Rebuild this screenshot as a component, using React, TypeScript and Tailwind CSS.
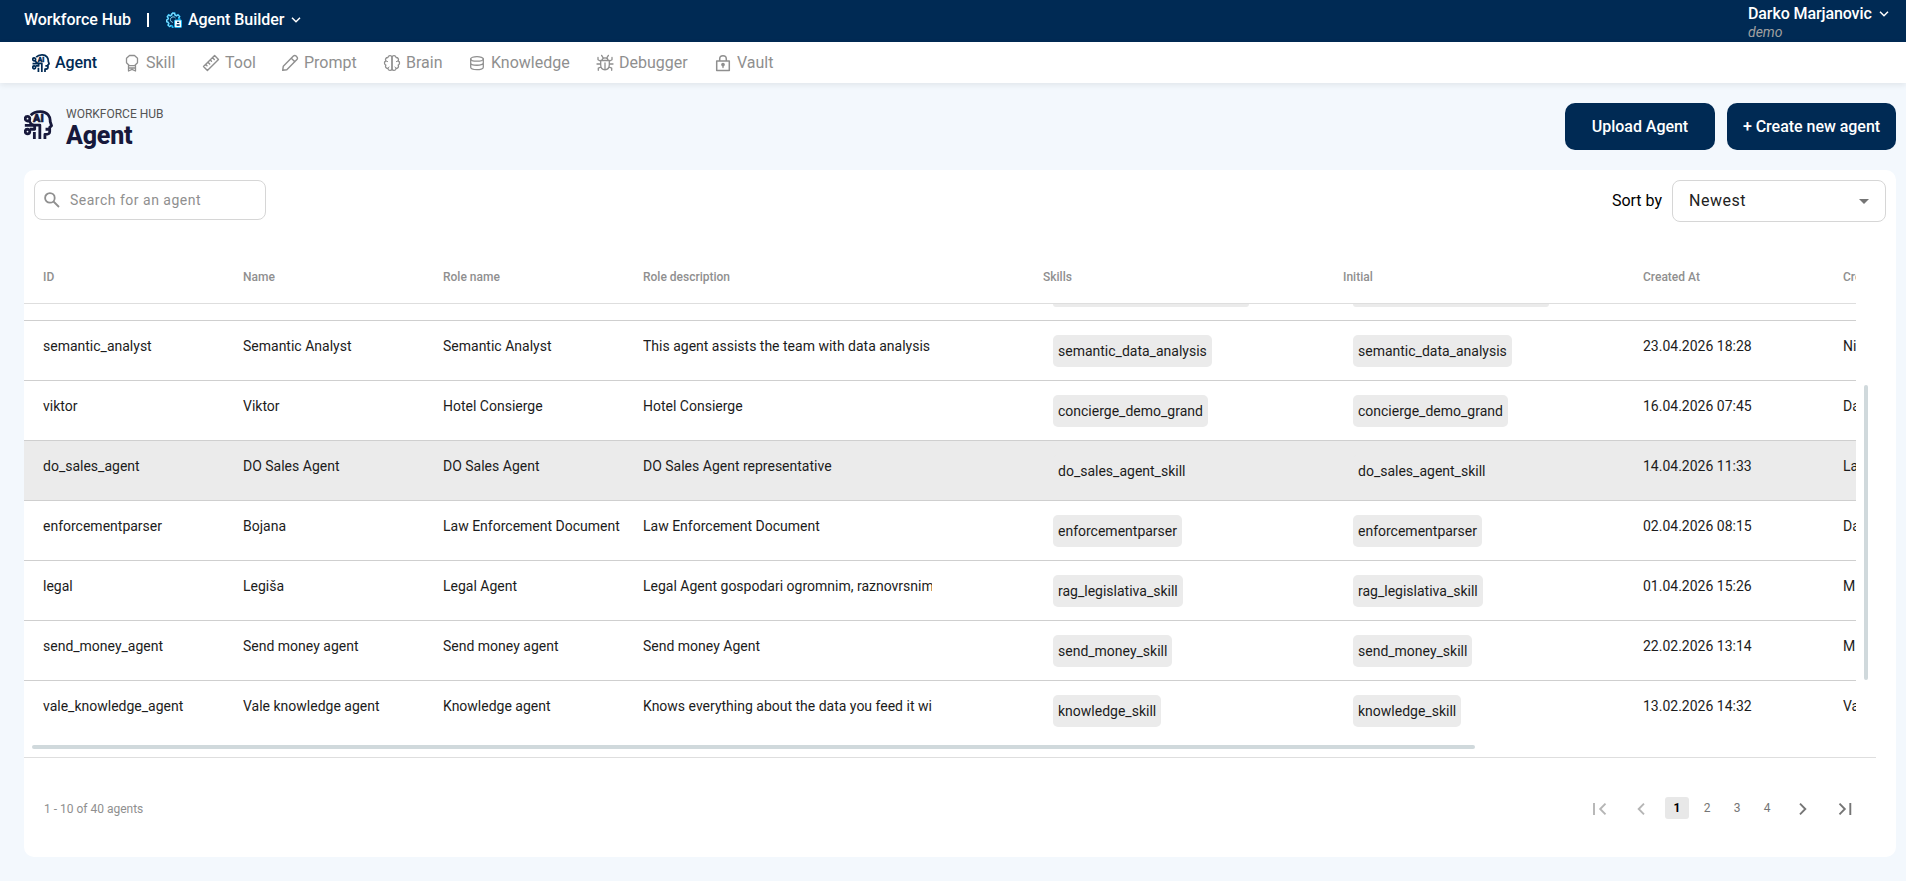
import { type ReactNode } from "react";

type Agent = {
  id: string;
  name: string;
  roleName: string;
  description: string;
  skill: string;
  createdAt: string;
  createdBy: string;
  selected?: boolean;
};

const agents: Agent[] = [
  { id: "semantic_analyst", name: "Semantic Analyst", roleName: "Semantic Analyst", description: "This agent assists the team with data analysis", skill: "semantic_data_analysis", createdAt: "23.04.2026 18:28", createdBy: "Ni" },
  { id: "viktor", name: "Viktor", roleName: "Hotel Consierge", description: "Hotel Consierge", skill: "concierge_demo_grand", createdAt: "16.04.2026 07:45", createdBy: "Da" },
  { id: "do_sales_agent", name: "DO Sales Agent", roleName: "DO Sales Agent", description: "DO Sales Agent representative", skill: "do_sales_agent_skill", createdAt: "14.04.2026 11:33", createdBy: "La", selected: true },
  { id: "enforcementparser", name: "Bojana", roleName: "Law Enforcement Document", description: "Law Enforcement Document", skill: "enforcementparser", createdAt: "02.04.2026 08:15", createdBy: "Da" },
  { id: "legal", name: "Legiša", roleName: "Legal Agent", description: "Legal Agent gospodari ogromnim, raznovrsnim", skill: "rag_legislativa_skill", createdAt: "01.04.2026 15:26", createdBy: "M" },
  { id: "send_money_agent", name: "Send money agent", roleName: "Send money agent", description: "Send money Agent", skill: "send_money_skill", createdAt: "22.02.2026 13:14", createdBy: "M" },
  { id: "vale_knowledge_agent", name: "Vale knowledge agent", roleName: "Knowledge agent", description: "Knows everything about the data you feed it wi", skill: "knowledge_skill", createdAt: "13.02.2026 14:32", createdBy: "Va" },
];

const gridCols = "grid grid-cols-[200px_200px_200px_400px_300px_300px_200px_200px] w-[2000px] pl-[19px]";

const AgentIcon = ({ className }: { className: string }) => (
  <svg viewBox="0 0 28 28" className={className} fill="none" stroke="currentColor" strokeWidth="2.700" strokeLinejoin="round">
    <path d="M6.500 5 C9 2.400 12.500 1.400 16 1.500 C22.500 1.700 25.600 6 25.300 11.200 L26.600 15.200 L24.800 16.800 V18.600 H20.800 M24.800 18.500 V21 C24.800 23.200 23.500 23.600 20.200 23.600 V28" />
    <circle cx="3.400" cy="8.400" r="2.200" />
    <circle cx="3.400" cy="20.800" r="2.200" />
    <path d="M5 10 C6 12.800 7.500 14.600 10 14.600 H15.300 V28" />
    <path d="M.8 14.800 H10.300 V18.600 H5.600 M10 21.200 V28" />
    <text x="8.800" y="11.800" fontSize="10.500" fontWeight="900" fontFamily="Roboto, sans-serif" fill="currentColor" stroke="currentColor" strokeWidth=".6">AI</text>
  </svg>
);

const BuilderIcon = () => (
  <svg viewBox="0 0 16 16" className="h-4 w-4">
    <path
      d="M6 1.200h2.600l.4 1.900 1.500.7 1.600-1 1.500 1.700-.9 1.500.5 1.200h1.200M6 1.200l-.4 1.900-1.300.7-1.700-.9L1.300 4.800l1 1.500-.5 1.300-1.200.3v1.800l1.500.4.7 1.500-.8 1.500 1.500 1.400 1.600-.9 1.100.5.4 1.300h1"
      fill="none"
      stroke="#19b5f1"
      strokeWidth="1.700"
    />
    <path
      d="M6 1.200h2.600l.4 1.900 1.500.7 1.600-1 1.500 1.700-.9 1.500M6 1.200l-.4 1.900-1.300.7-1.700-.9L1.300 4.800l1 1.500-.5 1.300-1.200.3v1.800l1.500.4.7 1.500-.8 1.500 1.500 1.400 1.600-.9"
      fill="none"
      stroke="#e2f7ff"
      strokeWidth=".6"
    />
    <path d="M9.500 6 A2.800 2.800 0 1 0 6.800 10.400" fill="none" stroke="#8bdcfa" strokeWidth="1" />
    <rect x="8.600" y="8" width="6.900" height="7.500" rx=".8" fill="#fff" stroke="#19b5f1" strokeWidth="1" />
    <path d="M11 10.300h2.200M10.600 13h3" stroke="#002a54" strokeWidth="1.300" />
  </svg>
);

const Stroke = ({ children }: { children: ReactNode }) => (
  <svg viewBox="0 0 18 18" className="h-[18px] w-[18px]" fill="none" stroke="currentColor" strokeWidth="1.300" strokeLinejoin="round" strokeLinecap="round">
    {children}
  </svg>
);

const ChevronDown = () => (
  <svg viewBox="0 0 10 6" className="h-1.5 w-2.5" fill="none" stroke="currentColor" strokeWidth="1.500">
    <path d="M1 .8 L5 4.800 L9 .8" />
  </svg>
);

const navItems: { label: string; width: string; icon: ReactNode }[] = [
  {
    label: "Skill",
    width: "w-[79px]",
    icon: (
      <Stroke>
        <path d="M6.500 1.500 H11.500 L14.500 4.300 V8.700 L11.500 11.700 H6.500 L3.500 8.700 V4.300 Z M5.500 11.500 V17 L9 15.400 L12.500 17 V11.500 M5.500 14 H12.500" />
      </Stroke>
    ),
  },
  {
    label: "Tool",
    width: "w-[79px]",
    icon: (
      <Stroke>
        <path d="M1.500 12.600 L12.600 1.500 L16.500 5.400 L5.400 16.500 Z M10.600 3.700 L12.300 5.400 M8.300 6 L9.500 7.200 M6 8.200 L7.700 9.900 M3.800 10.500 L5 11.700" strokeWidth="1.400" />
      </Stroke>
    ),
  },
  {
    label: "Prompt",
    width: "w-[102px]",
    icon: (
      <Stroke>
        <path d="M1.700 16.300 L2.300 12.200 L12.400 2.100 C13.200 1.300 14.300 1.300 15.100 2.100 L15.900 2.900 C16.700 3.700 16.700 4.800 15.900 5.600 L5.800 15.700 Z M10.300 4.200 L13.800 7.700" strokeWidth="1.400" />
      </Stroke>
    ),
  },
  {
    label: "Brain",
    width: "w-[85px]",
    icon: (
      <Stroke>
        <path d="M9 3 C8.300 1 5.200 1.200 4.900 3.500 C2.800 3.400 2 5.500 2.800 6.900 C1 7.800 1 10.200 2.800 11.100 C2 12.800 2.800 14.500 4.900 14.500 C5.200 16.900 8.300 17 9 15 Z" />
        <path d="M9 3 C9.700 1 12.800 1.200 13.100 3.500 C15.200 3.400 16 5.500 15.200 6.900 C17 7.800 17 10.200 15.200 11.100 C16 12.800 15.200 14.500 13.100 14.500 C12.800 16.900 9.700 17 9 15 Z" />
        <path d="M4.600 7.600 L2.800 6.900 M13.400 7.600 L15.200 6.900 M4.900 14.500 L6 13 M13.100 14.500 L12 13" strokeWidth="1" />
      </Stroke>
    ),
  },
  {
    label: "Knowledge",
    width: "w-[128px]",
    icon: (
      <Stroke>
        <ellipse cx="9" cy="4.900" rx="6.300" ry="2.300" />
        <path d="M2.700 4.900 V13.300 C2.700 16.500 15.300 16.500 15.300 13.300 V4.900 M2.700 9 C2.700 12 15.300 12 15.300 9" />
      </Stroke>
    ),
  },
  {
    label: "Debugger",
    width: "w-[118px]",
    icon: (
      <Stroke>
        <path d="M4.700 6.500 H13.300 V10.800 C13.300 17.500 4.700 17.500 4.700 10.800 Z M9 9 V15.300 M6 6.300 C6 3 12 3 12 6.300 M7 3.700 L5.600 1.400 M11 3.700 L12.400 1.400 M4.700 7.200 L2 5.700 V3.500 M13.300 7.200 L16 5.700 V3.500 M4.700 10 H1 M13.300 10 H17 M5 13 L2.300 14.200 V16.300 M13 13 L15.700 14.200 V16.300" />
      </Stroke>
    ),
  },
  {
    label: "Vault",
    width: "w-[80px]",
    icon: (
      <Stroke>
        <path d="M2.700 7 H15.300 V16.500 H2.700 Z M5.700 7 V5 C5.700 .8 12.300 .8 12.300 5 V7" strokeWidth="1.500" />
        <circle cx="9" cy="10.600" r="1.200" fill="currentColor" />
        <path d="M9 11 V13.600" />
      </Stroke>
    ),
  },
];

const Chip = ({ label }: { label: string }) => (
  <span className="ml-2.5 mt-3.5 h-8 w-fit rounded-[5px] bg-[#ebebeb] px-[5px] leading-8">{label}</span>
);

const AgentRow = ({ agent }: { agent: Agent }) => (
  <div className={`${gridCols} h-[60px] shrink-0 border-b border-[#cfcfcf] text-[14px] whitespace-nowrap text-[#1c1c1c] ${agent.selected ? "bg-[#ebebeb]" : ""}`}>
    <span className="pt-[15px] leading-[20px]">{agent.id}</span>
    <span className="pt-[15px] leading-[20px]">{agent.name}</span>
    <span className="pt-[15px] leading-[20px]">{agent.roleName}</span>
    <span className="w-[289px] overflow-hidden pt-[15px] leading-[20px]">{agent.description}</span>
    <Chip label={agent.skill} />
    <Chip label={agent.skill} />
    <span className="pt-[15px] leading-[20px]">{agent.createdAt}</span>
    <span className="pt-[15px] leading-[20px]">{agent.createdBy}</span>
  </div>
);

const Pager = () => (
  <div className="flex items-center text-[12px] text-[#757575]">
    <svg viewBox="0 0 14 12" className="h-3 w-3.5 text-[#b5b5b5]" fill="none" stroke="currentColor" strokeWidth="1.900">
      <path d="M1 0 V12 M12.500 .7 L7.200 6 L12.500 11.300" />
    </svg>
    <svg viewBox="0 0 8 12" className="ml-[30px] h-3 w-2 text-[#b5b5b5]" fill="none" stroke="currentColor" strokeWidth="1.900">
      <path d="M7 .7 L1.700 6 L7 11.300" />
    </svg>
    <div className="-mt-0.5 ml-5 flex items-center gap-1.5">
      <span className="h-[22px] w-6 rounded-[3px] bg-[#e8e8e8] text-center leading-[22px] font-bold text-black">1</span>
      <span className="w-6 text-center">2</span>
      <span className="w-6 text-center">3</span>
      <span className="w-6 text-center">4</span>
    </div>
    <svg viewBox="0 0 8 12" className="ml-5 h-3 w-2" fill="none" stroke="currentColor" strokeWidth="1.900">
      <path d="M1 .7 L6.300 6 L1 11.300" />
    </svg>
    <svg viewBox="0 0 14 12" className="ml-[31px] h-3 w-3.5" fill="none" stroke="currentColor" strokeWidth="1.900">
      <path d="M1.500 .7 L6.800 6 L1.500 11.300 M12.300 0 V12" />
    </svg>
  </div>
);

const App = () => {
  return (
    <div className="flex h-[881px] w-[1906px] flex-col overflow-hidden bg-[#f3f8fd] font-[Roboto,sans-serif]">
      <header className="flex h-[42px] shrink-0 justify-between bg-[#002a54] pl-6 text-[16px] font-medium text-white">
        <div className="flex h-[39px] items-center tracking-[-0.03px]">
          <span className="w-[123px]">Workforce Hub</span>
          <span className="h-3.5 w-0.5 bg-white" />
          <span className="ml-[17px]"><BuilderIcon /></span>
          <span className="ml-1.5 mr-[7px]">Agent Builder</span>
          <ChevronDown />
        </div>
        <div className="w-[158px]">
          <div className="flex h-[27px] items-center tracking-[-0.1px]">
            <span className="w-[131px]">Darko Marjanovic</span>
            <ChevronDown />
          </div>
          <div className="text-[14px] leading-[10px] font-normal text-[#a0a0a0] italic">demo</div>
        </div>
      </header>

      <nav className="flex h-[41px] shrink-0 items-center bg-white pl-8 text-[16px] text-[#8f8f8f] shadow-[0_2px_6px_rgba(0,0,0,0.08)]">
        <div className="flex w-[91px] items-center gap-[5px] font-medium tracking-[-0.1px] text-[#002a54]">
          <AgentIcon className="h-[18px] w-[18px]" />
          <span>Agent</span>
        </div>
        {navItems.map((item) => (
          <div key={item.label} className={`flex shrink-0 items-center gap-[5px] ${item.width}`}>
            {item.icon}
            <span>{item.label}</span>
          </div>
        ))}
      </nav>

      <div className="flex h-[87px] shrink-0 items-start justify-between pr-2.5 pl-6 pt-5">
        <div className="flex">
          <AgentIcon className="mt-[7px] h-[29px] w-[29px] text-[#17193b]" />
          <div className="ml-[13px] pt-1">
            <div className="text-[12px] leading-[14px] text-[#555]">WORKFORCE HUB</div>
            <h1 className="mt-px text-[25px] leading-7 font-extrabold tracking-[-0.2px] text-[#17193b]">Agent</h1>
          </div>
        </div>
        <div className="flex gap-3 text-[16px] font-medium tracking-[-0.03px] text-white">
          <button className="h-[47px] w-[150px] rounded-[10px] bg-[#002a54]">Upload Agent</button>
          <button className="h-[47px] w-[169px] rounded-[10px] bg-[#002a54]">+ Create new agent</button>
        </div>
      </div>

      <main className="ml-6 mr-2.5 flex h-[687px] shrink-0 flex-col rounded-[10px] bg-white">
        <div className="flex h-[81px] shrink-0 items-start justify-between px-2.5 pt-2.5">
          <div className="flex h-10 w-[232px] items-center rounded-lg border border-[#d6d6d6] pl-[9px] text-[#8f8f8f]">
            <svg viewBox="0 0 16 16" className="h-4 w-4" fill="none" stroke="currentColor" strokeWidth="1.800">
              <circle cx="5.900" cy="5.900" r="4.800" />
              <path d="M9.500 9.500 L15 15" />
            </svg>
            <span className="ml-2.5 text-[14px] tracking-[0.5px]">Search for an agent</span>
          </div>
          <div className="flex items-center gap-2.5 text-[16px]">
            <span className="text-black">Sort by</span>
            <div className="flex h-[42px] w-[214px] items-center justify-between rounded-lg border border-[#d6d6d6] pr-4 pl-4 tracking-[0.5px] text-[#222]">
              <span>Newest</span>
              <svg viewBox="0 0 10 5" className="h-[5px] w-2.5" fill="#757575">
                <path d="M0 0 H10 L5 5 Z" />
              </svg>
            </div>
          </div>
        </div>

        <div className="flex h-[490px] shrink-0">
          <div className="flex w-[1832px] flex-col overflow-hidden">
            <div className={`${gridCols} h-[53px] shrink-0 border-b border-[#dedede] pt-[18px] text-[12px] leading-4 font-medium text-[#8f8f8f]`}>
              <span>ID</span>
              <span>Name</span>
              <span>Role name</span>
              <span>Role description</span>
              <span>Skills</span>
              <span>Initial</span>
              <span>Created At</span>
              <span>Created By</span>
            </div>
            {/* tail of the row that is scrolled under the header */}
            <div className={`${gridCols} h-[17px] shrink-0 border-b border-[#cfcfcf]`}>
              <span className="col-start-5 ml-2.5 h-[3px] w-[196px] rounded-b-[5px] bg-[#ebebeb]" />
              <span className="ml-2.5 h-[3px] w-[196px] rounded-b-[5px] bg-[#ebebeb]" />
            </div>
            {agents.map((agent) => (
              <AgentRow key={agent.id} agent={agent} />
            ))}
          </div>
          <div className="ml-2 mt-[134px] h-[295px] w-1 rounded-full bg-[#d0d9dc]" />
        </div>

        {/* covers the bottom border of the last row */}
        <div className="z-10 -mt-1 h-[21px] w-[1852px] shrink-0 border-b border-[#dedede] bg-white pt-2 pl-2">
          <div className="h-1 w-[1443px] rounded-full bg-[#d0d9dc]" />
        </div>

        <div className="flex h-[101px] shrink-0 items-center justify-between pr-[44px] pl-5 text-[12px] text-[#8f8f8f]">
          <span>1 - 10 of 40 agents</span>
          <Pager />
        </div>
      </main>
    </div>
  );
};

export default App;
